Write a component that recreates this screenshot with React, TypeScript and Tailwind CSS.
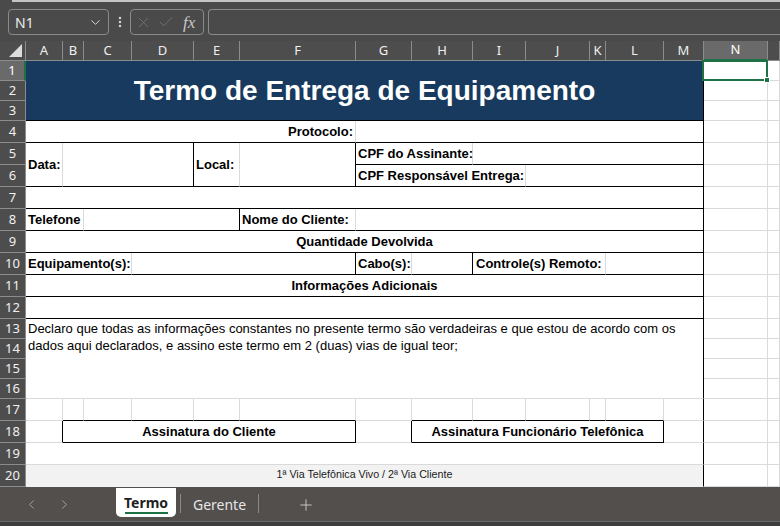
import { ChevronDown, ChevronLeft, ChevronRight, EllipsisVertical, X, Check, Plus } from 'lucide-react'

const ROWS = [
  'row-[2/3]', 'row-[3/4]', 'row-[4/5]', 'row-[5/6]', 'row-[6/7]',
  'row-[7/8]', 'row-[8/9]', 'row-[9/10]', 'row-[10/11]', 'row-[11/12]',
  'row-[12/13]', 'row-[13/14]', 'row-[14/15]', 'row-[15/16]', 'row-[16/17]',
  'row-[17/18]', 'row-[18/19]', 'row-[19/20]', 'row-[20/21]', 'row-[21/22]',
]

const COLS = [
  'col-[2/3]', 'col-[3/4]', 'col-[4/5]', 'col-[5/6]', 'col-[6/7]',
  'col-[7/8]', 'col-[8/9]', 'col-[9/10]', 'col-[10/11]', 'col-[11/12]',
  'col-[12/13]', 'col-[13/14]', 'col-[14/15]', 'col-[15/16]', 'col-[16/17]',
]

const LETTERS = ['A', 'B', 'C', 'D', 'E', 'F', 'G', 'H', 'I', 'J', 'K', 'L', 'M', 'N', '']

const RIGHT = { black: 'border-r-black', light: 'border-r-[#dadada]' }
const BOTTOM = { black: 'border-b-black', light: 'border-b-[#dadada]' }

type CellProps = {
  pos: string
  r?: 'black' | 'light'
  b?: 'black' | 'light'
  className?: string
  children?: React.ReactNode
}

function Cell({ pos, r = 'light', b = 'light', className = '', children }: CellProps) {
  return (
    <div className={`${pos} ${RIGHT[r]} ${BOTTOM[b]} border-r border-b bg-white flex items-center min-w-0 whitespace-nowrap ${className}`}>
      {children}
    </div>
  )
}

const label = 'font-bold text-[13px] text-black'

export default function App() {
  return (
    <div className="w-[780px] h-[526px] overflow-hidden bg-[#4a4a4a] font-['Liberation_Sans',Arial,sans-serif] flex flex-col">
      {/* ribbon edge */}
      <div className="h-[2px] pl-[12px]">
        <div className="h-full bg-[#c4c4c4]" />
      </div>

      {/* formula bar */}
      <div className="h-[39px] flex items-start pt-[7px] pl-[8px] font-['Noto_Sans',sans-serif]">
        <div className="w-[101px] h-[26px] rounded-[4px] border border-[#8a8a8a] flex items-center justify-between pl-[6px] pr-[5px] text-[14px] text-[#ececec]">
          <span>N1</span>
          <ChevronDown size={15} strokeWidth={1.6} className="text-[#d8d8d8]" />
        </div>
        <div className="w-[21px] h-[26px] flex items-center justify-center text-[#d0d0d0]">
          <EllipsisVertical size={14} strokeWidth={2.4} />
        </div>
        <div className="w-[74px] h-[26px] rounded-[4px] border border-[#8a8a8a] flex items-center pl-[4px] gap-[5px]">
          <X size={17} strokeWidth={1.1} className="text-[#7a7a7a]" />
          <Check size={18} strokeWidth={1.1} className="text-[#7a7a7a]" />
          <span className="ml-[3px] font-['Liberation_Serif',serif] italic text-[17px] text-[#c8c8c8] leading-none">fx</span>
        </div>
        <div className="ml-[4px] flex-1 h-[26px] rounded-l-[4px] border border-r-0 border-[#8a8a8a]" />
      </div>

      {/* sheet */}
      <div className="h-[446px] grid grid-cols-[26px_37px_21px_48px_62px_46px_116px_56px_61px_53px_64px_16px_58px_40px_64px_1fr] grid-rows-[20px_20px_20px_20px_22px_22px_22px_22px_22px_22px_22px_22px_22px_20px_20px_20px_20px_22px_22px_22px_22px]">
        {/* corner */}
        <div className="col-[1/2] row-[1/2] bg-[#4d4d4d] border-r border-b border-[#8c8c8c] flex items-end justify-end pr-[3px] pb-[3px]">
          <svg width="13" height="13" viewBox="0 0 13 13">
            <polygon points="13,0 13,13 0,13" fill="#dcdcdc" />
          </svg>
        </div>

        {/* column headers */}
        {LETTERS.map((l, i) => (
          <div
            key={i}
            className={`${COLS[i]} row-[1/2] flex items-center justify-center text-[13px] font-['Noto_Sans',sans-serif] border-r border-b border-r-[#8c8c8c] ${
              l === 'N' ? 'bg-[#6a6a6a] border-b-2 border-b-[#1e7145] text-white' : 'bg-[#4d4d4d] border-b-[#8c8c8c] text-[#f0f0f0]'
            }`}
          >
            {l}
          </div>
        ))}

        {/* row headers */}
        {ROWS.map((rc, i) => (
          <div
            key={i}
            className={`col-[1/2] ${rc} flex items-center justify-center text-[13px] font-['Noto_Sans',sans-serif] border-b border-b-[#8c8c8c] ${
              i === 0 ? 'bg-[#6a6a6a] border-r-2 border-r-[#1e7145] text-white' : 'bg-[#4d4d4d] border-r border-r-[#8c8c8c] text-[#f0f0f0]'
            }`}
          >
            {i + 1}
          </div>
        ))}

        {/* title */}
        <Cell pos="col-[2/15] row-[2/5]" r="black" b="black" className="!bg-[#173a5e] justify-center">
          <span className="font-bold text-[28px] text-white">Termo de Entrega de Equipamento</span>
        </Cell>

        {/* row 4 */}
        <Cell pos="col-[2/8] row-[5/6]" b="black" className="justify-end pr-[2px]">
          <span className={label}>Protocolo:</span>
        </Cell>
        <Cell pos="col-[8/15] row-[5/6]" r="black" b="black" />

        {/* rows 5-6 */}
        <Cell pos="col-[2/3] row-[6/8]" b="black" className="pl-[2px]">
          <span className={label}>Data:</span>
        </Cell>
        <Cell pos="col-[3/6] row-[6/8]" r="black" b="black" />
        <Cell pos="col-[6/7] row-[6/8]" b="black" className="pl-[2px]">
          <span className={label}>Local:</span>
        </Cell>
        <Cell pos="col-[7/8] row-[6/8]" r="black" b="black" />
        <Cell pos="col-[8/10] row-[6/7]" b="black" className="pl-[2px]">
          <span className={label}>CPF do Assinante:</span>
        </Cell>
        <Cell pos="col-[10/15] row-[6/7]" r="black" b="black" />
        <Cell pos="col-[8/11] row-[7/8]" b="black" className="pl-[2px]">
          <span className={label}>CPF Responsável Entrega:</span>
        </Cell>
        <Cell pos="col-[11/15] row-[7/8]" r="black" b="black" />

        {/* row 7 */}
        <Cell pos="col-[2/15] row-[8/9]" r="black" b="black" />

        {/* row 8 */}
        <Cell pos="col-[2/4] row-[9/10]" b="black" className="pl-[2px]">
          <span className={label}>Telefone</span>
        </Cell>
        <Cell pos="col-[4/7] row-[9/10]" r="black" b="black" />
        <Cell pos="col-[7/8] row-[9/10]" b="black" className="pl-[2px]">
          <span className={label}>Nome do Cliente:</span>
        </Cell>
        <Cell pos="col-[8/15] row-[9/10]" r="black" b="black" />

        {/* row 9 */}
        <Cell pos="col-[2/15] row-[10/11]" r="black" b="black" className="justify-center">
          <span className={label}>Quantidade Devolvida</span>
        </Cell>

        {/* row 10 */}
        <Cell pos="col-[2/5] row-[11/12]" b="black" className="pl-[2px]">
          <span className={label}>Equipamento(s):</span>
        </Cell>
        <Cell pos="col-[5/8] row-[11/12]" r="black" b="black" />
        <Cell pos="col-[8/9] row-[11/12]" b="black" className="pl-[2px]">
          <span className={label}>Cabo(s):</span>
        </Cell>
        <Cell pos="col-[9/10] row-[11/12]" r="black" b="black" />
        <Cell pos="col-[10/13] row-[11/12]" b="black" className="pl-[3px]">
          <span className={label}>Controle(s) Remoto:</span>
        </Cell>
        <Cell pos="col-[13/15] row-[11/12]" r="black" b="black" />

        {/* row 11 */}
        <Cell pos="col-[2/15] row-[12/13]" r="black" b="black" className="justify-center">
          <span className={label}>Informações Adicionais</span>
        </Cell>

        {/* row 12 */}
        <Cell pos="col-[2/15] row-[13/14]" r="black" b="black" />

        {/* rows 13-16 */}
        <Cell pos="col-[2/15] row-[14/18]" r="black" className="!items-start pl-[2px] pt-[1px] whitespace-normal">
          <p className="text-[13px] leading-[17px] text-black">
            Declaro que todas as informações constantes no presente termo são verdadeiras e que estou de acordo com os
            <br />
            dados aqui declarados, e assino este termo em 2 (duas) vias de igual teor;
          </p>
        </Cell>

        {/* row 17 */}
        {COLS.slice(0, 13).map((c, i) => (
          <Cell
            key={i}
            pos={`${c} row-[18/19]`}
            r={i === 12 ? 'black' : 'light'}
            b={(i >= 1 && i <= 5) || (i >= 7 && i <= 11) ? 'black' : 'light'}
          />
        ))}

        {/* row 18 */}
        <Cell pos="col-[2/3] row-[19/20]" r="black" />
        <Cell pos="col-[3/8] row-[19/20]" r="black" b="black" className="justify-center">
          <span className={label}>Assinatura do Cliente</span>
        </Cell>
        <Cell pos="col-[8/9] row-[19/20]" r="black" />
        <Cell pos="col-[9/14] row-[19/20]" r="black" b="black" className="justify-center">
          <span className={label}>Assinatura Funcionário Telefônica</span>
        </Cell>
        <Cell pos="col-[14/15] row-[19/20]" r="black" />

        {/* row 19 */}
        <Cell pos="col-[2/15] row-[20/21]" r="black" />

        {/* row 20 */}
        <Cell pos="col-[2/15] row-[21/22]" r="black" b="black" className="!bg-[#f2f2f2] !border-b-[#f2f2f2] justify-center pb-[3px]">
          <span className="text-[10.7px] text-[#1a1a1a]">1ª Via Telefônica Vivo / 2ª Via Cliente</span>
        </Cell>

        {/* columns N and O */}
        {ROWS.map((rc, i) => (
          <Cell key={`n${i}`} pos={`col-[15/16] ${rc}`} className="relative">
            {i === 0 && (
              <div className="absolute -left-[2px] -top-[1px] -right-[1px] -bottom-[1px] border-2 border-[#1e7145] z-10">
                <div className="absolute -right-[4px] -bottom-[4px] w-[6px] h-[6px] bg-[#1e7145] border border-white" />
              </div>
            )}
          </Cell>
        ))}
        {ROWS.map((rc, i) => (
          <Cell key={`o${i}`} pos={`col-[16/17] ${rc}`} />
        ))}
      </div>

      {/* sheet tabs */}
      <div className="h-[34px] bg-[#524f4d] flex items-start font-['Noto_Sans',sans-serif]">
        <div className="w-[116px] h-[29px] mt-[3px] flex items-center pl-[24px] gap-[18px] text-[#a3a3a3]">
          <ChevronLeft size={15} strokeWidth={1.6} />
          <ChevronRight size={15} strokeWidth={1.6} />
        </div>
        <div className="w-[60px] h-[29px] mt-[1px] bg-white rounded-b-[5px] flex flex-col items-center pt-[6px]">
          <span className="font-bold text-[14px] leading-[17px] text-[#1f1f1f]">Termo</span>
          <div className="w-[43px] h-[2px] bg-[#1e7145] mt-[1px]" />
        </div>
        <div className="ml-[4px] mt-[7px] w-px h-[19px] bg-[#8a8a8a]" />
        <div className="w-[77px] h-[29px] mt-[3px] flex items-center justify-center text-[14px] text-[#e6e6e6]">Gerente</div>
        <div className="mt-[7px] w-px h-[19px] bg-[#8a8a8a]" />
        <div className="ml-[38px] h-[29px] mt-[3px] flex items-center text-[#cfcfcf]">
          <Plus size={18} strokeWidth={1.2} />
        </div>
      </div>

      {/* status bar edge */}
      <div className="flex-1 bg-[#3d3d3d] border-t border-[#6a6a6a]" />
    </div>
  )
}
